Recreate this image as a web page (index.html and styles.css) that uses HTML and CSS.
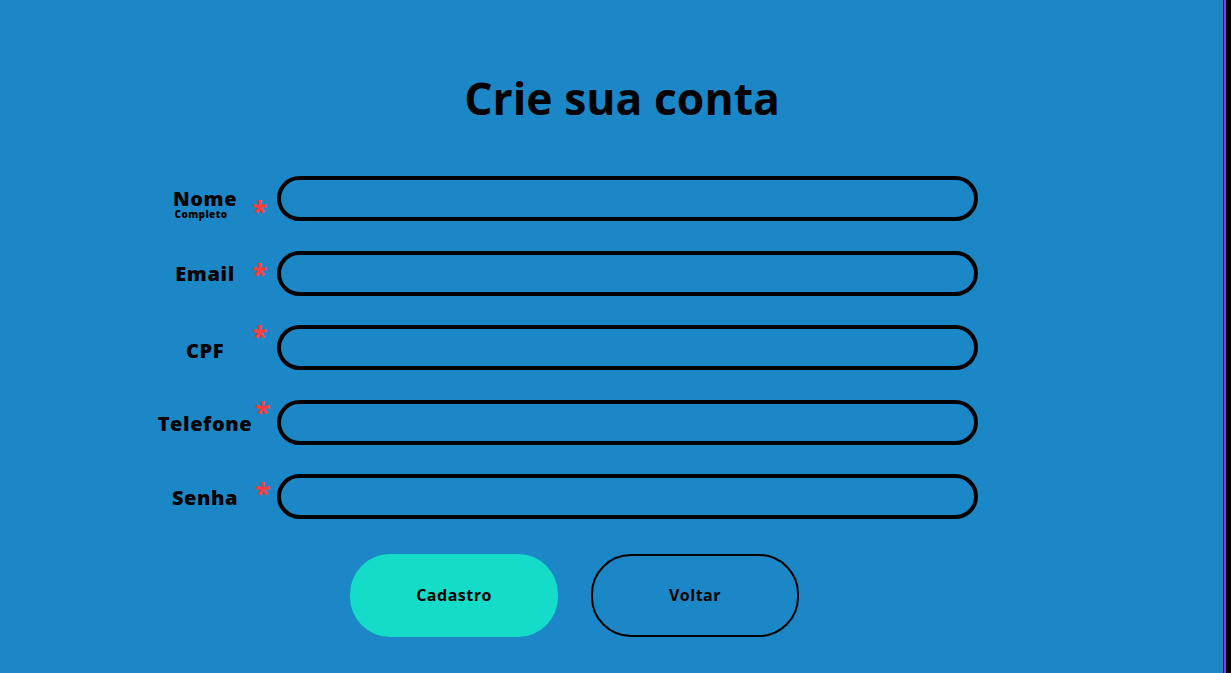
FILE: index.html
```html
<!DOCTYPE html>
<html lang="pt-BR">
<head>
<meta charset="utf-8">
<title>Crie sua conta</title>
<link rel="stylesheet" href="styles.css">
</head>
<body>
<main class="page">
  <h1 class="title">Crie sua conta</h1>
  <form class="form">
    <div class="row row-nome">
      <label class="label" for="nome">Nome<span class="sub">Completo</span></label>
      <span class="req">*</span>
      <input class="field" id="nome" type="text">
    </div>
    <div class="row row-email">
      <label class="label" for="email">Email</label>
      <span class="req">*</span>
      <input class="field" id="email" type="email">
    </div>
    <div class="row row-cpf">
      <label class="label" for="cpf">CPF</label>
      <span class="req">*</span>
      <input class="field" id="cpf" type="text">
    </div>
    <div class="row row-tel">
      <label class="label" for="tel">Telefone</label>
      <span class="req">*</span>
      <input class="field" id="tel" type="tel">
    </div>
    <div class="row row-senha">
      <label class="label" for="senha">Senha</label>
      <span class="req">*</span>
      <input class="field" id="senha" type="password">
    </div>
    <div class="actions">
      <button type="submit" class="btn btn-primary">Cadastro</button>
      <button type="button" class="btn btn-outline">Voltar</button>
    </div>
  </form>
</main>
</body>
</html>
```

FILE: styles.css
```css
html, body {
  margin: 0;
  padding: 0;
  background: #1c87c6;
}

body {
  font-family: "Open Sans", "Liberation Sans", sans-serif;
  color: #000;
}

.page {
  min-height: 100vh;
  box-sizing: border-box;
  padding-top: 67px;
  box-shadow: inset -5px 0 0 #000, inset -7px 0 0 #8b3fe0, inset -8px 0 0 #14213a;
}

.title {
  margin: 0;
  font-size: 44.5px;
  font-weight: 700;
  line-height: normal;
  text-align: center;
  padding-left: 13px;
}

.form {
  margin: 48px 0 0 155px;
  display: flex;
  flex-direction: column;
  gap: 29.5px;
}

.row {
  display: flex;
  align-items: flex-start;
  height: 45px;
}

.label {
  width: 100px;
  text-align: center;
  font-size: 20px;
  font-weight: 800;
  letter-spacing: 0.6px;
  line-height: normal;
  margin-top: 9px;
}

.sub {
  display: block;
  font-size: 10px;
  font-weight: 800;
  line-height: 10px;
  letter-spacing: 0.4px;
  margin-right: 8px;
}

.req {
  width: 22px;
  flex: none;
  font-size: 28px;
  font-weight: 700;
  line-height: 28px;
  color: #ff3b3b;
}

.row-nome .label { line-height: 20px; margin-top: 13px; }
.row-nome .req { margin-top: 21px; text-indent: -3px; }
.row-email .req { margin-top: 9px; text-indent: -3px; }
.row-cpf .label { margin-top: 12px; }
.row-cpf .req { margin-top: -3px; text-indent: -3px; }
.row-tel .label { margin-top: 10px; }
.row-tel .req { margin-top: -2px; }
.row-senha .label { margin-top: 10px; }
.row-senha .req { margin-top: 5px; }

.field {
  width: 701px;
  height: 45px;
  box-sizing: border-box;
  border: 4px solid #000;
  border-radius: 23px;
  background: transparent;
  outline: none;
  padding: 0 18px;
  font: inherit;
}

.actions {
  display: flex;
  gap: 33px;
  margin-top: 5.5px;
  padding-left: 195px;
}

.btn {
  width: 208px;
  height: 83px;
  box-sizing: border-box;
  border-radius: 40px;
  padding-bottom: 2px;
  font-family: "Open Sans", "Liberation Sans", sans-serif;
  font-size: 16px;
  font-weight: 700;
  letter-spacing: 0.5px;
  color: #000;
  cursor: pointer;
}

.btn-primary {
  background: #15dcc8;
  border: none;
}

.btn-outline {
  background: transparent;
  border: 2px solid #000;
}
```
